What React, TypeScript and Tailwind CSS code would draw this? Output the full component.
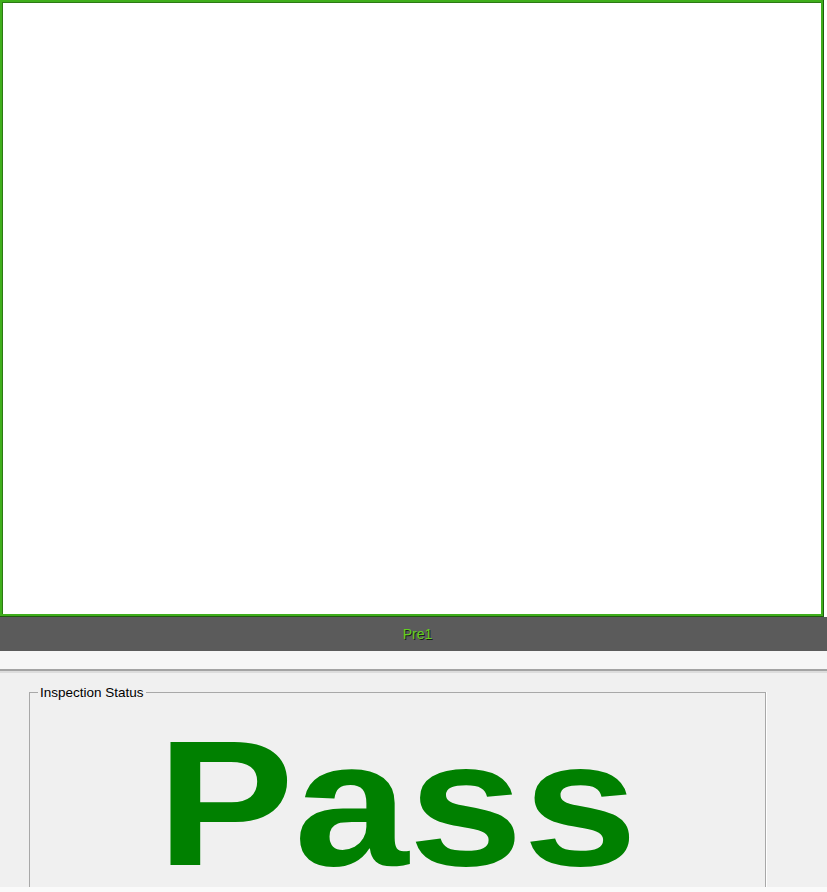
import React from 'react';

export default function App() {
  return (
    <div className="w-[827px] h-[892px] bg-white overflow-hidden flex flex-col font-['Liberation_Sans',Arial,sans-serif]">
      {/* camera view */}
      <div className="w-[824px] h-[617px] border-r border-b border-[#1f5c10]">
        <div className="w-full h-full border-2 border-[#3fae1c]">
          <div className="w-full h-full border-l border-t border-[#2b7a14] bg-white" />
        </div>
      </div>

      <div className="h-[34px] bg-[#5b5b5b] flex items-center justify-center">
        <span className="text-[14px] text-[#62d01e] [text-shadow:1px_1px_0_#1c1c1c] pl-[8px]">Pre1</span>
      </div>

      <div className="h-[18px] bg-[#f6f6f6]" />
      <div className="h-[2px] bg-[#a3a3a3]" />
      <div className="h-[2px] bg-[#dcdcdc]" />

      <div className="h-[214px] bg-[#f0f0f0] pl-[29px] pt-[12px]">
        <fieldset className="w-[737px] h-[202px] border border-b-0 border-[#a8a8a8] shadow-[1px_0_0_#ffffff] px-0">
          <legend className="ml-[8px] px-[2px] text-[13.5px] text-black leading-[15px]">Inspection Status</legend>
          <div className="mt-[33px] flex justify-center">
            <div className="px-[40px] text-[179px] leading-[140px] font-bold text-[#008000] scale-x-[1.15] origin-center whitespace-nowrap">Pass</div>
          </div>
        </fieldset>
      </div>

      <div className="flex-1 bg-[#fafafa]" />
    </div>
  );
}
